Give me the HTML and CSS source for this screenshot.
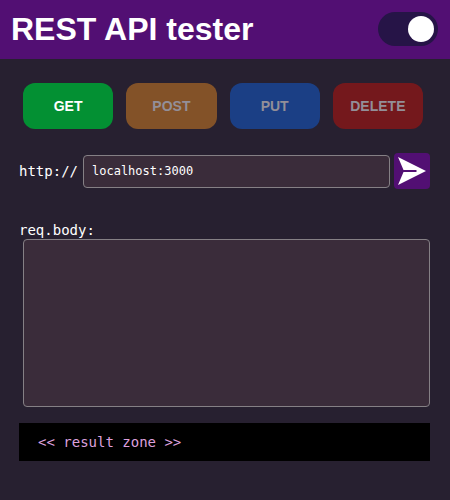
FILE: index.html
```html
<!DOCTYPE html>
<html lang="en">
<head>
<meta charset="utf-8">
<meta name="viewport" content="width=device-width, initial-scale=1">
<title>REST API tester</title>
<link rel="stylesheet" href="styles.css">
</head>
<body>
<header class="header">
  <h1 class="title">REST API tester</h1>
  <input class="switch" type="checkbox" role="switch" aria-label="Dark theme" checked>
</header>
<main class="main">
  <div class="methods">
    <button class="method get" type="button">GET</button>
    <button class="method post dim" type="button">POST</button>
    <button class="method put dim" type="button">PUT</button>
    <button class="method delete dim" type="button">DELETE</button>
  </div>
  <form class="request">
    <div class="url-row">
      <label for="url">http://</label>
      <input class="field url" id="url" type="text" value="localhost:3000">
      <button class="send" type="button" aria-label="Send">
        <svg class="send-icon" viewBox="0 0 36 36" aria-hidden="true">
          <path fill="#fff" d="M4 4 32 18 4 32 9.500 19H22.500V17H9.500Z"/>
        </svg>
      </button>
    </div>
    <label class="body-label" for="body">req.body:</label>
    <textarea class="field body" id="body"></textarea>
  </form>
  <output class="result">&lt;&lt; result zone &gt;&gt;</output>
</main>
</body>
</html>
```
FILE: styles.css
```css
* {
  box-sizing: border-box;
}

body {
  margin: 0;
  background: #272030;
  color: #fff;
  font: 14px/18px "DejaVu Sans Mono", monospace;
}

.header {
  display: flex;
  align-items: center;
  justify-content: space-between;
  padding: 10px 12px 11px 11px;
  background: #520f73;
}

.title {
  margin: 0;
  font: bold 32px/38px "Liberation Sans", Arial, sans-serif;
}

.switch {
  appearance: none;
  display: flex;
  justify-content: flex-end;
  width: 60px;
  height: 34px;
  margin: 0;
  padding: 4px;
  border-radius: 17px;
  background: #261447;
}

.switch::before {
  content: "";
  width: 26px;
  height: 26px;
  border-radius: 50%;
  background: #fff;
}

.switch:not(:checked) {
  justify-content: flex-start;
}

.main {
  padding: 24px 20px 32px 19px;
}

.methods {
  display: grid;
  grid-template-columns: repeat(4, 1fr);
  gap: 13px;
  padding: 0 7px 0 4px;
}

.method {
  height: 46px;
  padding: 0;
  border: 0;
  border-radius: 12px;
  color: #fff;
  font: bold 14px/16px "Liberation Sans", Arial, sans-serif;
}

.dim {
  color: #938f98;
}

.get {
  background: #039033;
}

.post {
  background: #835228;
}

.put {
  background: #1b3f85;
}

.delete {
  background: #74181c;
}

.url-row {
  display: flex;
  align-items: center;
  gap: 4px;
  margin-top: 24px;
}

.url-row label {
  width: 60px;
}

.field {
  border: 1px solid #858085;
  border-radius: 4px;
  background: #3a2c3a;
  color: #fff;
  font: 12px/16px "DejaVu Sans Mono", monospace;
}

.url {
  flex: 1;
  min-width: 0;
  height: 33px;
  padding: 0 8px;
}

.send {
  width: 36px;
  height: 36px;
  padding: 0;
  border: 0;
  border-radius: 4px;
  background: #520f73;
}

.send-icon {
  display: block;
  width: 36px;
  height: 36px;
}

.body-label {
  display: block;
  margin-top: 32px;
}

.body {
  display: block;
  width: calc(100% - 4px);
  height: 168px;
  margin-left: 4px;
  padding: 8px;
  resize: none;
}

.result {
  display: block;
  margin-top: 16px;
  padding: 10px 19px;
  background: #000;
  color: #dda0dd;
}
```
